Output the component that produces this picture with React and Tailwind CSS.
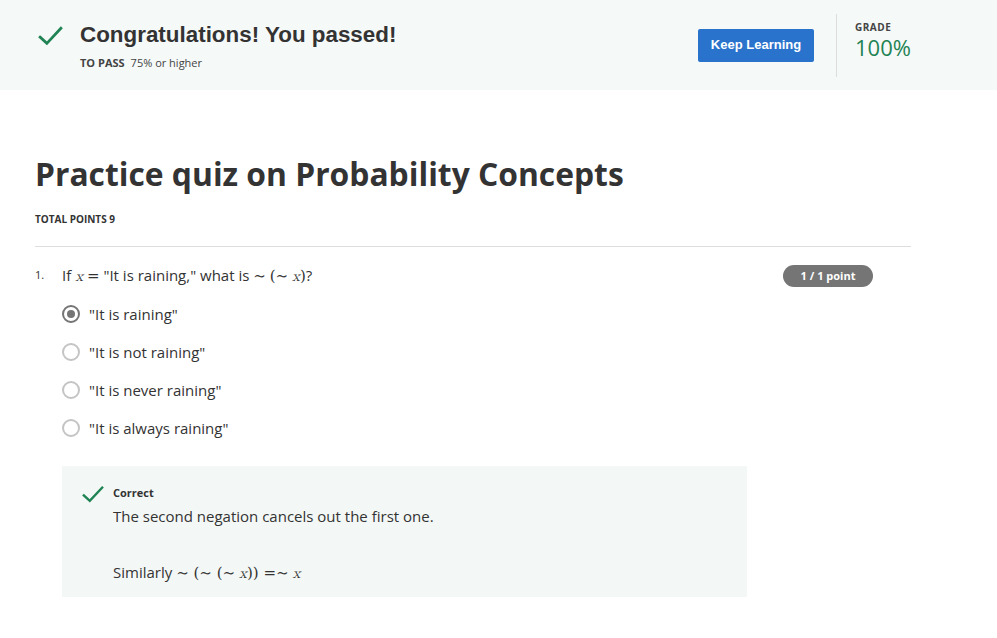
import React from 'react';

const Check = ({ className }) => (
  <svg viewBox="0 0 24 24" className={className} fill="none" stroke="currentColor" strokeWidth="2.6" strokeLinecap="square">
    <path d="M2 13.5l6.5 6L22 5" />
  </svg>
);

const M = ({ children }) => (
  <span className="font-['Latin_Modern_Math','DejaVu_Serif',serif] italic text-[15px]">{children}</span>
);
const Op = ({ children }) => (
  <span className="font-['DejaVu_Serif',serif] text-[15px]">{children}</span>
);

const options = ['"It is raining"', '"It is not raining"', '"It is never raining"', '"It is always raining"'];

export default function App() {
  return (
    <div className="w-[997px] h-[638px] bg-white text-[#333] font-['Open_Sans',sans-serif] overflow-hidden">
      {/* header band */}
      <header className="h-[90px] bg-[#f5f9f8] flex items-center">
        <div className="flex items-start pl-[38px] w-[660px]">
          <Check className="w-[25px] h-[25px] text-[#1f8354] mt-[3px]" />
          <div className="ml-[17px]">
            <h1 className="font-['Liberation_Sans',Arial,sans-serif] font-bold text-[22.4px] leading-[30px] text-[#333]">
              Congratulations! You passed!
            </h1>
            <div className="mt-[5px] text-[11px] leading-4 text-[#444]">
              <span className="font-bold">TO PASS</span>
              <span className="ml-[6px]">75% or higher</span>
            </div>
          </div>
        </div>
        <button className="ml-[38px] w-[116px] h-[33px] rounded-[2px] bg-[#2a73cc] text-white text-[13px] font-bold font-['Liberation_Sans',Arial,sans-serif]">
          Keep Learning
        </button>
        <div className="ml-[22px] w-px h-[63px] bg-[#ddd]" />
        <div className="ml-[18px] -mt-[10px] flex flex-col">
          <span className="text-[10px] font-bold tracking-[0.5px] text-[#444] leading-[12px]">GRADE</span>
          <span className="mt-[2px] text-[22px] text-[#1f8354] leading-[24px]">100%</span>
        </div>
      </header>

      <main className="px-[35px] w-[946px]">
        <h2 className="mt-[64px] text-[31.8px] font-bold leading-[40px] text-[#333]">
          Practice quiz on Probability Concepts
        </h2>
        <div className="mt-[19px] text-[10px] font-bold text-[#333] leading-3">TOTAL POINTS 9</div>
        <div className="mt-[21px] h-px bg-[#ddd]" />

        <div className="mt-[17px] flex items-start">
          <span className="w-[27px] text-[11px] leading-[22px] text-[#333]">1.</span>
          <div className="flex-1">
            <div className="flex items-center justify-between">
              <p className="text-[15px] leading-[22px] text-[#333]">
                If <M>x</M> <Op>=</Op> "It is raining," what is <Op>∼</Op> <Op>(∼</Op> <M>x</M><Op>)</Op>?
              </p>
              <span className="mr-[38px] h-[22px] w-[90px] rounded-full bg-[#757575] text-white text-[11px] font-bold flex items-center justify-center">
                1 / 1 point
              </span>
            </div>

            <div className="mt-[15px] flex flex-col gap-[16px]">
              {options.map((o, i) => (
                <label key={o} className="flex items-center h-[22px]">
                  <span className={`w-[18px] h-[18px] rounded-full border-2 flex items-center justify-center ${i === 0 ? 'border-[#757575]' : 'border-[#c4c4c4]'}`}>
                    {i === 0 && <span className="w-[8px] h-[8px] rounded-full bg-[#757575]" />}
                  </span>
                  <span className="ml-[9px] text-[15px] text-[#333]">{o}</span>
                </label>
              ))}
            </div>

            <div className="mt-[27px] w-[685px] h-[131px] bg-[#f3f8f6] pl-[20px] pt-[17px] flex items-start">
              <Check className="w-[22px] h-[22px] text-[#1f8354]" />
              <div className="ml-[9px]">
                <div className="text-[11px] font-bold leading-[20px] text-[#333]">Correct</div>
                <p className="text-[15px] leading-[22px] text-[#333] mt-[2px]">The second negation cancels out the first one.</p>
                <p className="text-[15px] leading-[22px] text-[#333] mt-[34px]">
                  Similarly <Op>∼ (∼ (∼</Op> <M>x</M><Op>)) =∼</Op> <M>x</M>
                </p>
              </div>
            </div>
          </div>
        </div>
      </main>
    </div>
  );
}
